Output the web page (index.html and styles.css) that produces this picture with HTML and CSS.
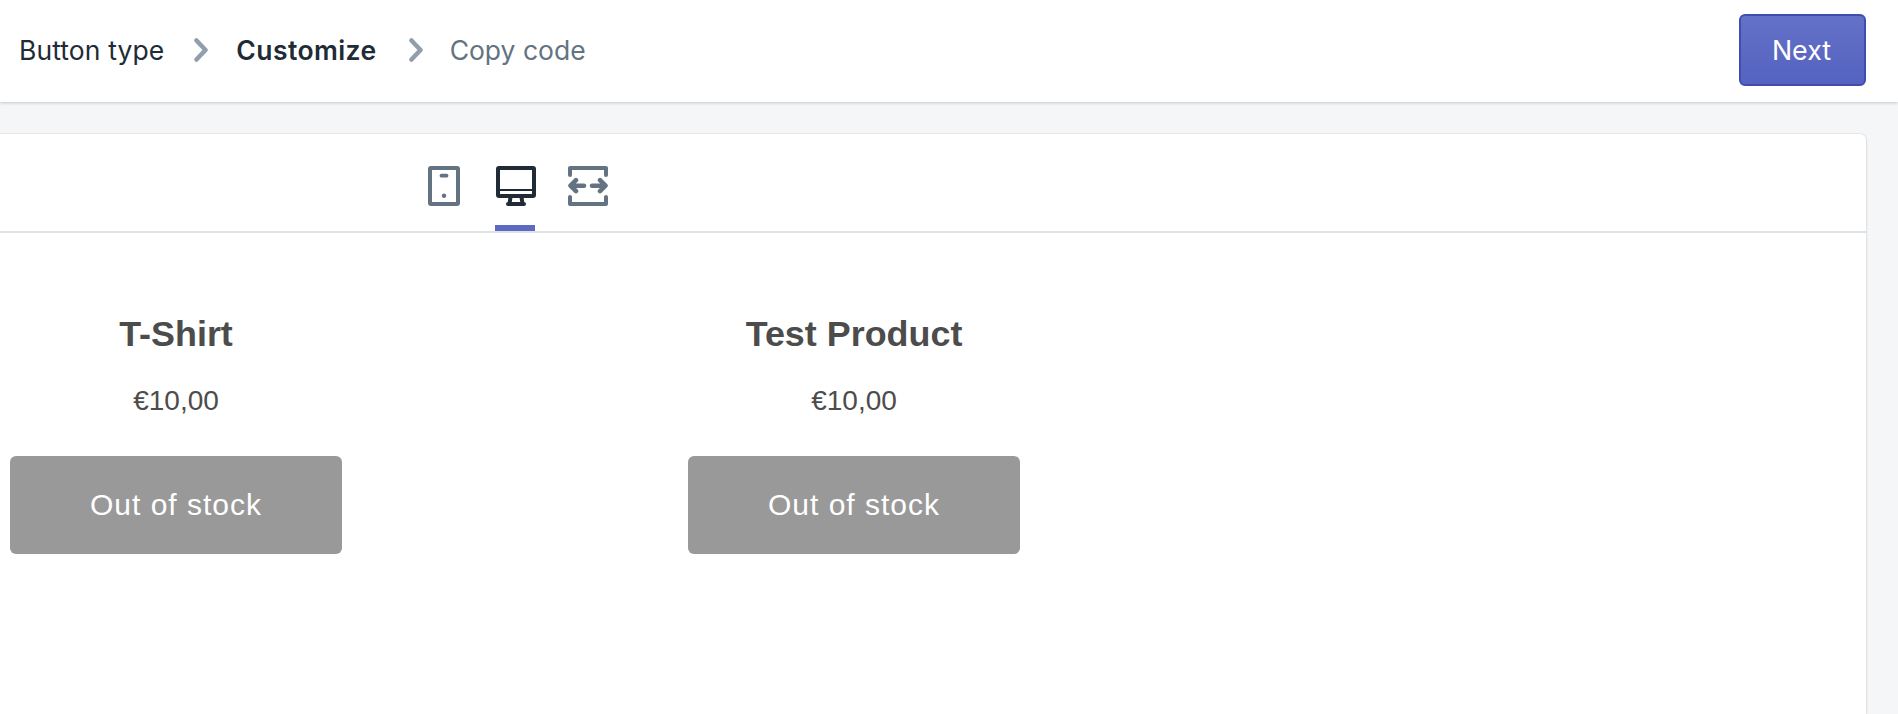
FILE: index.html
```html
<!DOCTYPE html>
<html lang="en">
<head>
<meta charset="utf-8">
<title>Customize</title>
<link rel="stylesheet" href="styles.css">
</head>
<body>
<header class="topbar">
  <nav class="steps">
    <span class="step">Button type</span>
    <svg class="chev" viewBox="0 0 14 24"><path d="M2.500 2.500 L11.500 12 L2.500 21.500"/></svg>
    <span class="step current">Customize</span>
    <svg class="chev" viewBox="0 0 14 24"><path d="M2.500 2.500 L11.500 12 L2.500 21.500"/></svg>
    <span class="step muted">Copy code</span>
  </nav>
  <button class="next">Next</button>
</header>
<main class="main">
  <section class="card">
    <div class="tabs">
      <div class="tab phone">
        <svg class="ico-phone" viewBox="0 0 32 40"><rect class="st" x="2" y="2" width="28" height="36" rx="1"/><path class="st thin" d="M13.500 9.700 H18.500"/><circle class="dot" cx="16" cy="29.700" r="2.200"/></svg>
      </div>
      <div class="tab active">
        <svg class="ico-desk" viewBox="0 0 40 40"><rect class="st" x="2" y="2" width="36" height="28" rx="1"/><path class="st line" d="M2 24 H38"/><path class="st stand" d="M14.500 31 L13.500 38 M25.500 31 L26.500 38 M12 38 H28"/></svg>
      </div>
      <div class="tab expand">
        <svg class="ico-exp" viewBox="0 0 40 40"><path class="st" d="M2 9 V2 H38 V9 M2 31 V38 H38 V31"/><path class="st arrow" d="M16 19.700 H3 M8 14.200 L2.500 19.700 L8 25.200 M24 19.700 H37 M32 14.200 L37.500 19.700 L32 25.200"/></svg>
      </div>
    </div>
    <div class="products">
      <article class="product">
        <h2 class="title">T-Shirt</h2>
        <p class="price">€10,00</p>
        <div class="stock">Out of stock</div>
      </article>
      <article class="product">
        <h2 class="title">Test Product</h2>
        <p class="price">€10,00</p>
        <div class="stock">Out of stock</div>
      </article>
    </div>
  </section>
</main>
</body>
</html>
```

FILE: styles.css
```css
* { box-sizing: border-box; }
html, body { margin: 0; height: 100%; overflow: hidden; }
body { background: #f4f6f8; font-family: Inter, "Noto Sans", sans-serif; }

.topbar {
  height: 102px;
  background: #fff;
  box-shadow: 0 1px 3px rgba(63, 63, 68, .25);
  display: flex;
  align-items: center;
  justify-content: space-between;
  padding: 0 32px 2px 19px;
  position: relative;
}
.steps { display: flex; align-items: center; font-size: 26.500px; color: #212b36; }
.step { letter-spacing: .1px; }
.step:first-child { margin-right: 30px; }
.step.current { font-weight: 600; margin: 0 32px 0 28px; letter-spacing: .42px; }
.step.muted { color: #637381; margin-left: 27px; letter-spacing: 0; }
.chev { width: 14px; height: 24px; fill: none; stroke: #919eab; stroke-width: 4.500; stroke-linecap: round; stroke-linejoin: round; }

.next {
  width: 127px;
  height: 72px;
  border: 2px solid #3f4eae;
  border-radius: 6px;
  background: linear-gradient(180deg, #6371c7, #5563c1);
  color: #fff;
  font: 400 26.800px Inter, sans-serif;
  padding: 0 2px 0 0;
}

.main { padding: 31.500px 32px 0 0; }
.card {
  height: 580px;
  background: #fff;
  border-radius: 0 6px 0 0;
  box-shadow: 0 0 0 1px rgba(63, 63, 68, .06), 0 1px 3px rgba(63, 63, 68, .16);
}
.tabs {
  height: 99.500px;
  border-bottom: 2px solid #dfe3e8;
  display: flex;
  padding-left: 428px;
}
.tab { height: 97.500px; padding-top: 32.500px; margin-right: 32px; border-bottom: 6px solid transparent; }
.tab.active { border-bottom-color: #5c6ac4; margin-left: 3px; width: 40px; }
.tab svg { display: block; height: 40px; }
.ico-phone { width: 32px; }
.ico-desk { width: 40px; margin-left: 1px; }
.ico-exp { width: 40px; margin-left: 1px; }
.st { fill: none; stroke: #637381; stroke-width: 4; stroke-linecap: round; stroke-linejoin: round; }
.thin { stroke-width: 3.800; }
.arrow { stroke-width: 4.500; }
.dot { fill: #637381; }
.ico-desk .st { stroke: #212b36; }
.ico-desk .line { stroke-width: 2; stroke-linecap: butt; }
.ico-desk .stand { stroke-width: 4; }

.products { display: flex; gap: 346px; padding: 80px 0 0 10px; }
.product { width: 332px; text-align: center; font-family: "Liberation Sans", Arial, sans-serif; color: #4c4c4c; }
.title { margin: 0; font-size: 35.900px; line-height: 42px; font-weight: 700; }
.price { margin: 29px 0 0; font-size: 28px; line-height: 34px; }
.stock {
  margin-top: 38px;
  height: 98px;
  background: #999;
  border-radius: 6px;
  color: #fff;
  font-size: 30px;
  line-height: 98px;
  letter-spacing: 1px;
}
```
